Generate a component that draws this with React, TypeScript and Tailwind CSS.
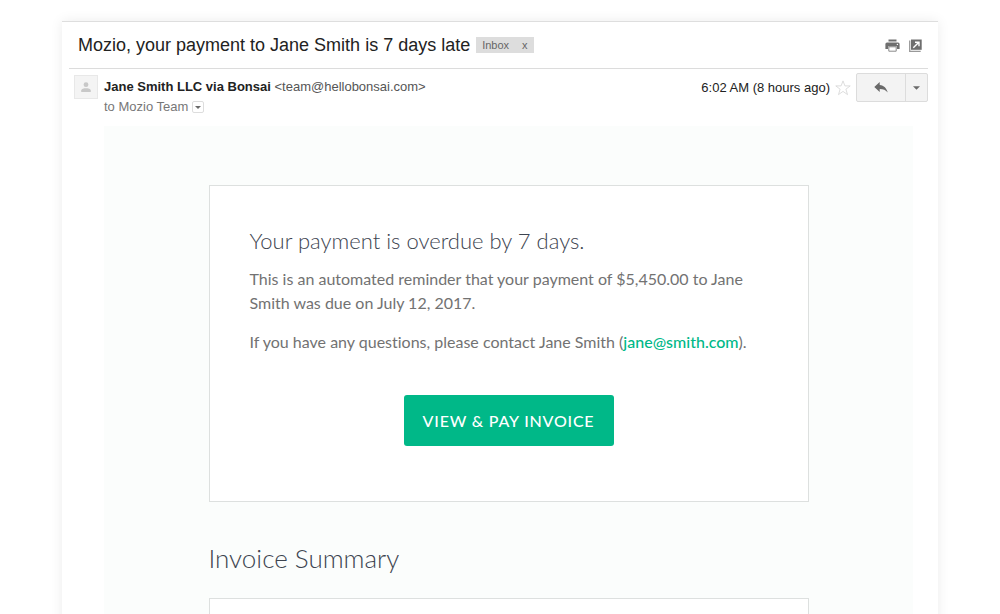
function PrintIcon() {
  return (
    <svg viewBox="0 0 15 13" className="h-[13px] w-[15px]" fill="#6e6e6e" aria-hidden="true">
      <path d="M3.500.5h8v2h-8z" />
      <path d="M2 3.500h11a1.600 1.600 0 0 1 1.600 1.600V10H12V7.500H3V10H.4V5.100A1.600 1.600 0 0 1 2 3.500z" />
      <path d="M3.800 7.800h7.400v4.400H3.800z" fill="#fff" stroke="#8a8a8a" />
      <circle cx="12.400" cy="5.400" r=".7" fill="#fff" />
    </svg>
  )
}

function NewWindowIcon() {
  return (
    <svg viewBox="0 0 13 13" className="h-[13px] w-[13px]" aria-hidden="true">
      <path d="M.7 1.500v10.800h11" fill="none" stroke="#999" strokeWidth="1.300" />
      <path d="M2 .5h10.700v10.300H2z" fill="#6e6e6e" />
      <path d="M4.300 8.800l5-5M6 3.200h4v4" fill="none" stroke="#fff" strokeWidth="1.400" />
    </svg>
  )
}

function PersonIcon() {
  return (
    <svg viewBox="0 0 10 11" className="h-[11px] w-[10px]" fill="#c8c8c8" aria-hidden="true">
      <circle cx="5" cy="2.700" r="2.400" />
      <path d="M.2 10V8.600C.2 6.900 3 6.300 5 6.300s4.800.6 4.800 2.300V10z" />
    </svg>
  )
}

function StarIcon() {
  return (
    <svg viewBox="0 0 16 16" className="h-4 w-4" fill="#fff" stroke="#d4d4d4" strokeWidth=".8" aria-hidden="true">
      <path d="M8 .9l1.900 5h5.300l-4.300 3.300 1.600 5.400L8 11.400l-4.500 3.200 1.600-5.400L.8 5.900h5.300z" />
    </svg>
  )
}

function ReplyIcon() {
  return (
    <svg viewBox="0 0 14 11" className="h-[11px] w-[14px]" fill="#6a6a6a" aria-hidden="true">
      <path d="M5.700 0v2.900c4.300.5 7 3.200 8 7.700C11.800 8.100 9.300 7 5.700 7v3L.3 5z" />
    </svg>
  )
}

function Caret({ className }: { className: string }) {
  return (
    <svg viewBox="0 0 8 4" className={className} fill="#6a6a6a" aria-hidden="true">
      <path d="M0 0h8L4 4z" />
    </svg>
  )
}

/** Subject line, inbox label and message tools. */
function SubjectBar() {
  return (
    <header className="flex h-[47px] items-center justify-between border-b border-[#dcdcdc] pr-[6px] pl-[9px]">
      <div className="flex items-center gap-[6px]">
        <h1 className="text-[18px] leading-6 text-[#222]">Mozio, your payment to Jane Smith is 7 days late</h1>
        <span className="flex h-4 items-center gap-[13px] bg-[#ddd] px-[6px] text-[11px] leading-4 text-[#666]">
          Inbox
          <button type="button" aria-label="Remove label">
            x
          </button>
        </span>
      </div>
      <div className="flex items-center gap-[9px]">
        <button type="button" aria-label="Print">
          <PrintIcon />
        </button>
        <button type="button" aria-label="Open in new window">
          <NewWindowIcon />
        </button>
      </div>
    </header>
  )
}

/** Sender details on the left, time and reply controls on the right. */
function SenderRow() {
  return (
    <div className="flex h-[57px] items-start justify-between pt-1 pl-[5px] text-[13px]">
      <div className="flex gap-[6px] pt-[2px]">
        <div className="flex h-6 w-6 items-center justify-center border border-[#e8e8e8] bg-[#f4f4f4]">
          <PersonIcon />
        </div>
        <div>
          <p className="leading-6 text-[#555]">
            <b className="text-[#222]">Jane Smith LLC via Bonsai</b> &lt;team@hellobonsai.com&gt;
          </p>
          <p className="flex items-center gap-1 leading-4 text-[#777]">
            to Mozio Team
            <button
              type="button"
              aria-label="Show details"
              className="flex h-3 w-3 items-center justify-center rounded-xs border border-[#ddd]"
            >
              <Caret className="h-[3px] w-[6px]" />
            </button>
          </p>
        </div>
      </div>
      <div className="flex items-center">
        <span className="text-[#222]">6:02 AM (8 hours ago)</span>
        <button type="button" aria-label="Star" className="mx-[5px]">
          <StarIcon />
        </button>
        <div className="flex h-[29px] rounded-xs border border-[#dcdcdc] bg-[#f3f3f3]">
          <button type="button" aria-label="Reply" className="flex w-12 items-center justify-center">
            <ReplyIcon />
          </button>
          <button
            type="button"
            aria-label="More"
            className="flex w-[22px] items-center justify-center border-l border-[#dcdcdc]"
          >
            <Caret className="h-1 w-[7px]" />
          </button>
        </div>
      </div>
    </div>
  )
}

function EmailBody() {
  return (
    <div className="mr-[15px] ml-[35px] bg-[#fbfdfc] pt-[59px] pb-16 font-['Lato',sans-serif] [font-variant-ligatures:none]">
      <div className="mx-auto max-w-[600px]">
        <section className="border border-[#dde0df] bg-white px-10 pt-[39px] pb-[55px] text-[16px] leading-6 text-[#727272]">
          <h2 className="text-[22px] leading-8 font-light text-[#3d4450]">Your payment is overdue by 7 days.</h2>
          <p className="mt-[10px]">
            This is an automated reminder that your payment of $5,450.00 to Jane Smith was due on July 12, 2017.
          </p>
          <p className="mt-[15px]">
            If you have any questions, please contact Jane Smith (
            <a href="mailto:jane@smith.com" className="font-medium text-[#00b888]">
              jane@smith.com
            </a>
            ).
          </p>
          <button
            type="button"
            className="mx-auto mt-[41px] block h-[51px] w-[210px] rounded-[3px] bg-[#00b888] text-[16px] font-medium tracking-wider text-white"
          >
            VIEW &amp; PAY INVOICE
          </button>
        </section>
        <h2 className="mt-[38px] text-[26px] leading-9 font-light text-[#3d4450]">Invoice Summary</h2>
        <section className="mt-[22px] h-40 border border-[#dde0df] bg-white" />
      </div>
    </div>
  )
}

export default function App() {
  return (
    <main className="h-screen overflow-hidden bg-white px-[62px] pt-[21px] font-['Liberation_Sans',Arial,sans-serif]">
      <article className="border-t border-[#dedede] bg-white pr-[10px] pl-[7px] shadow-[0_0_12px_rgba(0,0,0,0.08)]">
        <SubjectBar />
        <SenderRow />
        <EmailBody />
      </article>
    </main>
  )
}
